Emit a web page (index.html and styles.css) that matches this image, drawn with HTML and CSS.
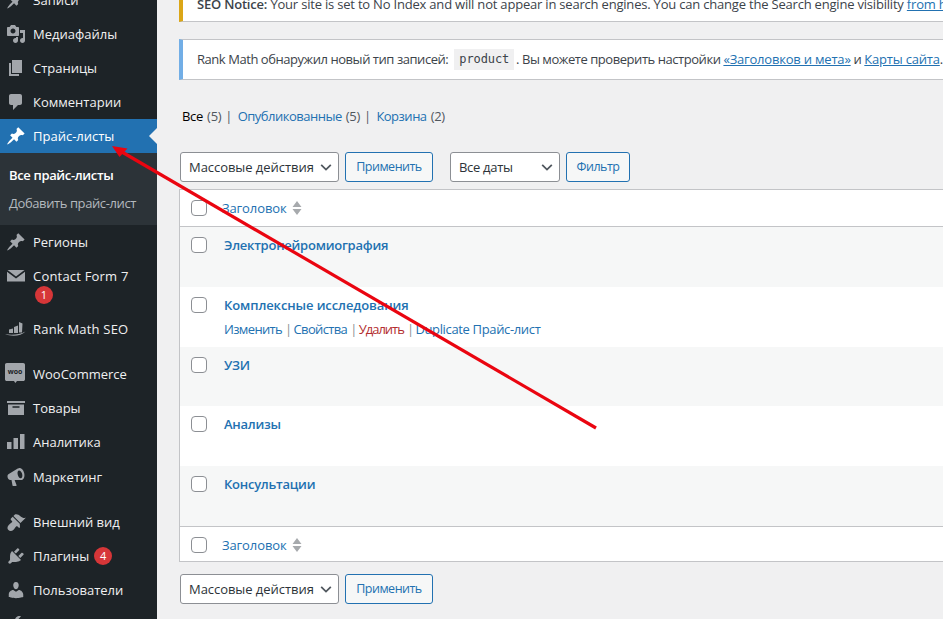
FILE: index.html
```html
<!DOCTYPE html>
<html lang="ru">
<head>
<meta charset="utf-8">
<title>Прайс-листы</title>
<link rel="stylesheet" href="styles.css">
</head>
<body>
<div class="layout">
<nav class="sidebar">
  <a class="item"><svg class="ic" viewBox="0 0 20 20"><path d="M10.44 3.02l1.82-1.82 6.36 6.35-1.83 1.82c-1.05-.68-2.48-.57-3.41.36l-.75.75c-.92.93-1.04 2.35-.35 3.41l-1.83 1.82-2.41-2.41-2.8 2.79c-.42.42-3.38 2.71-3.8 2.29s1.86-3.39 2.28-3.81l2.79-2.79L4.1 9.36l1.83-1.82c1.05.69 2.48.57 3.4-.36l.75-.75c.93-.92 1.05-2.35.36-3.41z"/></svg><span>Записи</span></a>
  <a class="item"><svg class="ic" viewBox="0 0 20 20"><path fill-rule="evenodd" d="M13 11V4c0-.55-.45-1-1-1h-1.67L9 1H5L3.67 3H2c-.55 0-1 .45-1 1v7c0 .55.45 1 1 1h10c.55 0 1-.45 1-1zM7 4.5c1.38 0 2.5 1.12 2.5 2.5S8.38 9.5 7 9.5 4.5 8.38 4.5 7 5.62 4.5 7 4.5z"/><path d="M14 6h5v10.5c0 1.38-1.12 2.5-2.5 2.5S14 17.88 14 16.5s1.12-2.5 2.5-2.5c.17 0 .34.02.5.05V9h-3V6zm-4 8.05V13h2v3.5c0 1.38-1.12 2.5-2.5 2.5S7 17.88 7 16.5 8.12 14 9.5 14c.17 0 .34.02.5.05z"/></svg><span>Медиафайлы</span></a>
  <a class="item"><svg class="ic" viewBox="0 0 20 20"><path d="M6 15V2h10v13H6zm-1 1h8v2H3V5h2v11z"/></svg><span>Страницы</span></a>
  <a class="item"><svg class="ic" viewBox="0 0 20 20"><path d="M5 2h9c1.1 0 2 .9 2 2v7c0 1.1-.9 2-2 2h-2l-5 5v-5H5c-1.1 0-2-.9-2-2V4c0-1.1.9-2 2-2z"/></svg><span>Комментарии</span></a>
  <a class="item current"><svg class="ic" viewBox="0 0 20 20"><path d="M10.44 3.02l1.82-1.82 6.36 6.35-1.83 1.82c-1.05-.68-2.48-.57-3.41.36l-.75.75c-.92.93-1.04 2.35-.35 3.41l-1.83 1.82-2.41-2.41-2.8 2.79c-.42.42-3.38 2.71-3.8 2.29s1.86-3.39 2.28-3.81l2.79-2.79L4.1 9.36l1.83-1.82c1.05.69 2.48.57 3.4-.36l.75-.75c.93-.92 1.05-2.35.36-3.41z"/></svg><span>Прайс-листы</span></a>
  <div class="submenu">
    <a class="sub active">Все прайс-листы</a>
    <a class="sub">Добавить прайс-лист</a>
  </div>
  <a class="item"><svg class="ic" viewBox="0 0 20 20"><path d="M10.44 3.02l1.82-1.82 6.36 6.35-1.83 1.82c-1.05-.68-2.48-.57-3.41.36l-.75.75c-.92.93-1.04 2.35-.35 3.41l-1.83 1.82-2.41-2.41-2.8 2.79c-.42.42-3.38 2.71-3.8 2.29s1.86-3.39 2.28-3.81l2.79-2.79L4.1 9.36l1.83-1.82c1.05.69 2.48.57 3.4-.36l.75-.75c.93-.92 1.05-2.35.36-3.41z"/></svg><span>Регионы</span></a>
  <a class="item tall"><svg class="ic" viewBox="0 0 20 20"><path d="M1.500 4h17L10 10.500z"/><path d="M1 5.800l9 6.800 9-6.800V15.500H1z"/></svg><span class="stack lat">Contact Form 7<b class="badge stacked">1</b></span></a>
  <a class="item"><svg class="ic" viewBox="0 0 20 20"><path d="M3 10.500l4-1V14H3zM8 8l4-1.500V14H8zM13 3l3.500 1.500-.5 9h-3z"/><path d="M-1 15c6 1.500 14 1 20.500-2.500-4 4.500-14 5.500-20.500 2.500z"/></svg><span class="lat">Rank Math SEO</span></a>
  <div class="sep"></div>
  <a class="item"><svg class="ic" viewBox="0 0 20 20"><path d="M.8-1h16.400c1 0 1.800.8 1.800 1.800v14.400c0 1-.8 1.800-1.800 1.800H11l-1.700 2-1.300-2H.8c-1 0-1.800-.8-1.800-1.800V.8C-1-.2-.2-1 .8-1z"/><text class="woo" x="9" y="10" text-anchor="middle">woo</text></svg><span>WooCommerce</span></a>
  <a class="item"><svg class="ic" viewBox="0 0 20 20"><path d="M1 3h18v2H1zM2 6.500h16V17H2zM6.500 8.300v1.500h7V8.300z" fill-rule="evenodd"/></svg><span>Товары</span></a>
  <a class="item"><svg class="ic" viewBox="0 0 20 20"><path d="M1 10h4.500v7H1zM7.500 6H12v11H7.500zM14 2h4.500v15H14z"/></svg><span>Аналитика</span></a>
  <a class="item nudge"><svg class="ic" viewBox="0 0 20 20"><path fill-rule="evenodd" d="M18.150 5.900c.9 3.300-.2 6.400-2.300 7-.3.1-.5.1-.8.1H8.600l2 5.200c.1.400-.2.800-.6.800H7c-.3 0-.5-.2-.5-.5l-1-5.500H4.250c-1.100.1-2.200-1-2.600-2.500-.4-1.600 0-3.100 1.100-3.500l9-5.400c.3-.2.600-.3.900-.4 2.100-.6 4.600 1.500 5.500 4.700zM12.800 3.500c-1.200.3-1.600 2.300-1 4.400.6 2.100 2 3.600 3.200 3.300 1.200-.3 1.700-2.300 1.100-4.400-.6-2.100-2.100-3.600-3.300-3.300z"/></svg><span>Маркетинг</span></a>
  <div class="sep"></div>
  <a class="item"><svg class="ic" viewBox="0 0 20 20"><path d="M14.480 11.060L7.410 3.990l1.500-1.500c.5-.56 2.300-.47 3.510.32 1.210.8 1.430 1.280 2.910 2.100 1.180.64 2.450 1.260 4.450.85zm-.71.71L6.700 4.700 4.930 6.470c-.39.39-.39 1.020 0 1.410l1.060 1.060c.39.39.39 1.030 0 1.420-.6.6-1.430 1.110-2.210 1.700-.35.26-.7.53-1.010.84-1.560 1.560-1.760 3.790-.38 5.170 1.380 1.380 3.610 1.180 5.170-.38.31-.31.58-.66.84-1.010.59-.78 1.100-1.610 1.700-2.210.39-.39 1.030-.39 1.420 0l1.060 1.060c.39.39 1.020.39 1.410 0z"/></svg><span>Внешний вид</span></a>
  <a class="item"><svg class="ic" viewBox="0 0 20 20"><path d="M13.110 4.360L9.870 7.600 8 5.730l3.240-3.240c.35-.34 1.050-.2 1.560.32.52.51.66 1.210.31 1.550zm-8 1.770l.91-1.120 9.010 9.010-1.190.84c-.71.71-2.630 1.160-3.820 1.160H6.140L4.900 17.260c-.59.59-1.540.59-2.120 0-.59-.58-.59-1.530 0-2.120l1.240-1.240v-3.880c0-1.130.4-3.190 1.090-3.890zm7.260 3.970l3.240-3.240c.34-.35 1.040-.21 1.550.31.52.51.66 1.210.31 1.550l-3.240 3.250z"/></svg><span>Плагины</span><b class="badge">4</b></a>
  <a class="item"><svg class="ic" viewBox="0 0 20 20"><path d="M10 9.250c-2.270 0-2.730-3.440-2.730-3.440C7 4.020 7.820 2 9.970 2c2.160 0 2.980 2.020 2.710 3.810 0 0-.41 3.440-2.680 3.440zm0 2.570L12.720 10c2.390 0 4.520 2.330 4.520 4.530v2.490s-3.650 1.130-7.240 1.130c-3.650 0-7.240-1.130-7.240-1.130v-2.490c0-2.250 1.940-4.480 4.470-4.480z"/></svg><span>Пользователи</span></a>
  <a class="item"><svg class="ic" viewBox="0 0 20 20"><path d="M16.680 9.770c-1.340 1.340-3.300 1.670-4.950.99l-5.410 6.520c-.99.99-2.590.99-3.580 0s-.99-2.590 0-3.580l6.520-5.410c-.68-1.650-.35-3.610.99-4.950 1.280-1.280 3.120-1.640 4.730-1.080L12 5.500 14.500 8l3.260-2.730c.56 1.610.2 3.450-1.080 4.500z"/></svg><span>Инструменты</span></a>
</nav>

<main class="main">
  <div class="notice notice-seo"><strong>SEO Notice:</strong> Your site is set to No Index and will not appear in search engines. You can change the Search engine visibility <a class="link" href="#">from here</a>.</div>
  <div class="notice notice-info">Rank Math обнаружил новый тип записей:&nbsp;<code class="code">product</code>&nbsp;. Вы можете проверить настройки&nbsp;<a class="link" href="#">«Заголовков и мета»</a>&nbsp;и&nbsp;<a class="link" href="#">Карты сайта</a>.</div>

  <ul class="views">
    <li><strong class="now">Все</strong> <span class="count">(5)</span><i class="pipe">|</i></li>
    <li><a class="plain">Опубликованные</a> <span class="count">(5)</span><i class="pipe">|</i></li>
    <li><a class="plain">Корзина</a> <span class="count">(2)</span></li>
  </ul>

  <div class="toolbar">
    <div class="select bulk">Массовые действия<svg class="chev" viewBox="0 0 16 16"><path d="M2.500 5.500L8 11l5.500-5.500"/></svg></div>
    <div class="btn apply">Применить</div>
    <div class="select dates">Все даты<svg class="chev" viewBox="0 0 16 16"><path d="M2.500 5.500L8 11l5.500-5.500"/></svg></div>
    <div class="btn filter">Фильтр</div>
  </div>

  <div class="table">
    <div class="row head">
      <span class="cb"></span>
      <a class="sort">Заголовок<svg class="sorter" viewBox="0 0 10 16"><path d="M5 1l4.500 6h-9zM5 15l-4.500-6h9z"/></svg></a>
    </div>
    <div class="row item-row alt"><span class="cb"></span><div class="cell"><a class="title">Электронейромиография</a></div></div>
    <div class="row item-row"><span class="cb"></span><div class="cell"><a class="title wide">Комплексные исследования</a>
      <div class="actions"><a class="plain">Изменить</a><i class="bar">|</i><a class="plain">Свойства</a><i class="bar">|</i><a class="del">Удалить</a><i class="bar">|</i><a class="plain dup">Duplicate Прайс-лист</a></div></div></div>
    <div class="row item-row alt"><span class="cb"></span><div class="cell"><a class="title">УЗИ</a></div></div>
    <div class="row item-row"><span class="cb"></span><div class="cell"><a class="title">Анализы</a></div></div>
    <div class="row item-row alt"><span class="cb"></span><div class="cell"><a class="title">Консультации</a></div></div>
    <div class="row foot">
      <span class="cb"></span>
      <a class="sort">Заголовок<svg class="sorter" viewBox="0 0 10 16"><path d="M5 1l4.500 6h-9zM5 15l-4.500-6h9z"/></svg></a>
    </div>
  </div>

  <div class="toolbar bottom">
    <div class="select bulk">Массовые действия<svg class="chev" viewBox="0 0 16 16"><path d="M2.500 5.500L8 11l5.500-5.500"/></svg></div>
    <div class="btn apply">Применить</div>
  </div>
</main>
</div>

<svg class="arrow" viewBox="0 0 943 619" aria-hidden="true">
  <path class="arrow-line" d="M596 428L122 152"/>
  <path class="arrow-head" d="M112 146L127.500 148.500 119.500 157z"/>
</svg>
</body>
</html>
```
FILE: styles.css
```css
* { box-sizing: border-box; }
html, body { margin: 0; padding: 0; height: 100%; overflow: hidden; }
body {
  background: #f0f0f1;
  color: #3c434a;
  font-family: "Open Sans", "Noto Sans", sans-serif;
  font-size: 13px;
  line-height: 1.4;
  position: relative;
}
.layout { display: flex; align-items: flex-start; height: 619px; overflow: hidden; }

/* sidebar */
.sidebar {
  width: 157px;
  flex: none;
  margin-top: -17px;
  background: #1d2327;
  min-height: 660px;
}
.item {
  display: flex;
  align-items: center;
  height: 34px;
  color: #f0f0f1;
  position: relative;
}
.item.tall { height: 53px; align-items: flex-start; padding-top: 8px; }
.item.nudge { height: 35px; padding-top: 1px; }
.lat { letter-spacing: 0.2px; }
.ic { width: 20px; height: 20px; margin: 0 7px 0 6px; fill: #a2a6ab; flex: none; overflow: visible; }
.tall .ic { margin-top: -1px; }
.stack { display: block; }
.sep { height: 11px; }
.current { background: #2271b1; color: #fff; }
.current .ic { fill: #fff; }
.current::after {
  content: "";
  position: absolute;
  right: 0;
  top: 50%;
  margin-top: -8px;
  border: 8px solid transparent;
  border-right-color: #f0f0f1;
  border-left-width: 0;
}
.submenu {
  background: #2c3338;
  height: 72px;
  padding: 8px 0 0 9px;
}
.sub { display: block; height: 28px; line-height: 28px; color: #b4b9be; letter-spacing: -0.4px; }
.sub.active { color: #fff; font-weight: 600; letter-spacing: -0.35px; }
.badge {
  display: inline-block;
  width: 18px;
  height: 18px;
  line-height: 18px;
  margin-left: 5px;
  border-radius: 50%;
  background: #d63638;
  color: #fff;
  font-size: 11px;
  font-weight: 400;
  text-align: center;
  letter-spacing: 0;
}
.badge.stacked { display: block; margin: 1px 0 0 2px; }
.woo { font-size: 7px; font-weight: 700; fill: #1d2327; font-family: "Open Sans", sans-serif; }

/* main */
.main { flex: none; width: 900px; padding-left: 22px; letter-spacing: -0.3px; }
.notice {
  background: #fff;
  border: 1px solid #c3c4c7;
  border-width: 1px 0;
  border-left: 4px solid #72aee6;
  padding-left: 14px;
  white-space: nowrap;
  display: flex;
  align-items: center;
}
.notice-seo {
  display: block;
  margin-top: -18px;
  height: 40px;
  padding-top: 12px;
  border-left-color: #dba617;
  letter-spacing: -0.2px;
}
.notice-seo strong { font-weight: 600; }
.notice-info { height: 41px; margin-top: 17px; letter-spacing: -0.45px; }
.link { color: #2271b1; text-decoration: underline; letter-spacing: -0.2px; }
.code {
  background: #f0f0f1;
  font-family: "DejaVu Sans Mono", monospace;
  font-size: 12px;
  padding: 2px 5px;
  margin: 0 -1px 0 3px;
  letter-spacing: -0.1px;
}
.views {
  list-style: none;
  margin: 27px 0 0 3px;
  padding: 0;
  display: flex;
  height: 18px;
}
.views li { white-space: pre; color: #50575e; }
.now { color: #000; font-weight: 400; }
.count { color: #50575e; margin-left: 1px; }
.pipe { font-style: normal; color: #50575e; margin: 0 5.500px 0 4px; }
.plain { color: #2271b1; }
.views .plain { letter-spacing: -0.5px; }

.toolbar { display: flex; margin: 27px 0 0 1px; height: 30px; }
.select {
  display: flex;
  align-items: center;
  justify-content: space-between;
  background: #fff;
  border: 1px solid #8c8f94;
  border-radius: 3px;
  padding: 0 5px 0 8px;
  color: #2c3338;
  letter-spacing: -0.05px;
}
.bulk { width: 159px; }
.dates { width: 110px; margin-left: 17px; letter-spacing: -0.3px; }
.chev { width: 14px; height: 14px; fill: none; stroke: #50575e; stroke-width: 2; }
.btn {
  display: flex;
  align-items: center;
  justify-content: center;
  border: 1px solid #2271b1;
  border-radius: 3px;
  background: #f6f7f7;
  color: #2271b1;
  margin-left: 6px;
  font-size: 12.500px;
  letter-spacing: -0.5px;
}
.btn.apply { width: 88px; }
.btn.filter { width: 64px; }

.table {
  margin-top: 7px;
  background: #fff;
  border: 1px solid #c3c4c7;
  border-right: 0;
}
.row { display: flex; align-items: flex-start; padding-left: 11px; }
.head { height: 37px; align-items: center; border-bottom: 1px solid #c3c4c7; }
.foot { height: 35px; padding-top: 2px; align-items: center; border-top: 1px solid #c3c4c7; }
.item-row { height: 59.800px; padding-top: 10px; }
.alt { background: #f6f7f7; }
.cb {
  width: 16px;
  height: 16px;
  flex: none;
  background: #fff;
  border: 1px solid #8c8f94;
  border-radius: 4px;
}
.sort { margin-left: 15px; color: #2271b1; display: flex; align-items: center; letter-spacing: -0.1px; }
.sorter { width: 10px; height: 16px; margin-left: 5px; fill: #a7aaad; }
.cell { margin-left: 17px; margin-top: -1px; }
.title { display: block; color: #2271b1; font-weight: 600; font-size: 13px; letter-spacing: -0.25px; }
.title.wide { letter-spacing: -0.1px; }
.actions { margin-top: 6px; color: #c3c4c7; white-space: nowrap; letter-spacing: -0.65px; }
.bar { font-style: normal; color: #8c8f94; margin: 0 2px 0 3px; }
.del { color: #b32d2e; letter-spacing: -1px; }
.dup { letter-spacing: -0.35px; }
.bottom { margin-top: 12px; }

/* annotation arrow */
.arrow { position: absolute; left: 0; top: 0; width: 943px; height: 619px; pointer-events: none; }
.arrow-line { fill: none; stroke: #ea0510; stroke-width: 3.200; }
.arrow-head { fill: #ea0510; }
```
